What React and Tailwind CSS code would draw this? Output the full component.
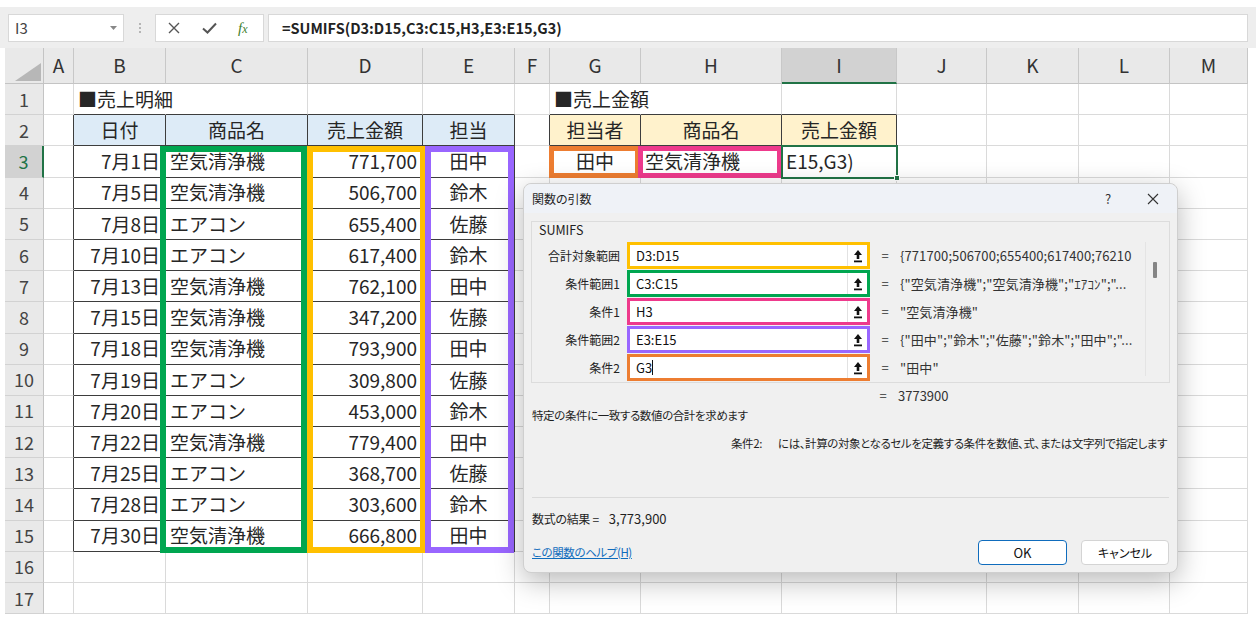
import React from 'react'

const LETTERS = ['A', 'B', 'C', 'D', 'E', 'F', 'G', 'H', 'I', 'J', 'K', 'L', 'M']

const SALES = [
  ['7月1日', '空気清浄機', '771,700', '田中'],
  ['7月5日', '空気清浄機', '506,700', '鈴木'],
  ['7月8日', 'エアコン', '655,400', '佐藤'],
  ['7月10日', 'エアコン', '617,400', '鈴木'],
  ['7月13日', '空気清浄機', '762,100', '田中'],
  ['7月15日', '空気清浄機', '347,200', '佐藤'],
  ['7月18日', '空気清浄機', '793,900', '田中'],
  ['7月19日', 'エアコン', '309,800', '佐藤'],
  ['7月20日', 'エアコン', '453,000', '鈴木'],
  ['7月22日', '空気清浄機', '779,400', '田中'],
  ['7月25日', 'エアコン', '368,700', '佐藤'],
  ['7月28日', 'エアコン', '303,600', '鈴木'],
  ['7月30日', '空気清浄機', '666,800', '田中'],
]

const ARGS = [
  { label: '合計対象範囲', val: 'D3:D15', box: 'border-[#ffc000]', res: '{771700;506700;655400;617400;76210' },
  { label: '条件範囲1', val: 'C3:C15', box: 'border-[#00a650]', res: '{"空気清浄機";"空気清浄機";"ｴｱｺﾝ";"...' },
  { label: '条件1', val: 'H3', box: 'border-[#ee3a8c]', res: '"空気清浄機"' },
  { label: '条件範囲2', val: 'E3:E15', box: 'border-[#9966ff]', res: '{"田中";"鈴木";"佐藤";"鈴木";"田中";"...' },
  { label: '条件2', val: 'G3', box: 'border-[#ed7d31]', res: '"田中"', caret: true },
]

// what sits in each cell (c: 1 = A ... 13 = M)
const getCell = (r, c) => {
  if (r === 1 && c === 2) return { t: '■売上明細', a: 'left', spill: true }
  if (r === 1 && c === 7) return { t: '■売上金額', a: 'left', spill: true }
  if (r === 2 && c >= 2 && c <= 5) {
    return { t: ['日付', '商品名', '売上金額', '担当'][c - 2], a: 'center', bg: 'bg-[#ddebf7]' }
  }
  if (r === 2 && c >= 7 && c <= 9) {
    return { t: ['担当者', '商品名', '売上金額'][c - 7], a: 'center', bg: 'bg-[#fff2cc]' }
  }
  if (r >= 3 && r <= 15 && c >= 2 && c <= 5) {
    const row = SALES[r - 3]
    return { t: row[c - 2], a: ['right', 'left', 'right', 'center'][c - 2] }
  }
  if (r === 3 && c === 7) return { t: '田中', a: 'center' }
  if (r === 3 && c === 8) return { t: '空気清浄機', a: 'left' }
  if (r === 3 && c === 9) return { t: 'E15,G3)', a: 'left' }
  return { t: '', a: 'left' }
}

const SheetCell = ({ r, c }) => {
  const info = getCell(r, c)
  const darkR = (r >= 2 && r <= 15 && c >= 1 && c <= 5) || (r >= 2 && r <= 3 && c >= 6 && c <= 9)
  const darkB = (r >= 1 && r <= 15 && c >= 2 && c <= 5) || (r >= 1 && r <= 3 && c >= 7 && c <= 9)
  const align =
    info.a === 'right' ? 'justify-end pr-[5px]' : info.a === 'center' ? 'justify-center' : 'justify-start pl-[4px]'
  const rightColor = info.spill ? 'border-r-transparent' : darkR ? 'border-r-[#3d3d3d]' : 'border-r-[#dadada]'
  return (
    <div
      className={`h-[31.2px] flex items-center overflow-visible whitespace-nowrap border-r border-b text-[19px] text-[#262626] ${rightColor} ${
        darkB ? 'border-b-[#3d3d3d]' : 'border-b-[#dadada]'
      } ${info.bg || ''} ${align}`}
    >
      {info.t}
    </div>
  )
}

const UploadIcon = () => (
  <svg width="10" height="14" viewBox="0 0 10 14">
    <path d="M5 1 L9 6 H6.3 V10 H3.7 V6 H1 Z" fill="#111" />
    <rect x="1" y="11.5" width="8" height="1.8" fill="#111" />
  </svg>
)

const Dialog = () => (
  <div className="absolute left-[523px] top-[183px] w-[655px] h-[390px] rounded-[8px] border border-[#cfcfcf] bg-[#f0f0f0] shadow-[0_8px_28px_rgba(0,0,0,0.28)] flex flex-col text-[12px] text-[#1f1f1f] font-['Noto_Sans_CJK_JP',sans-serif] [font-feature-settings:'palt']">
    <div className="h-[29px] rounded-t-[8px] bg-[#eff2f7] flex items-center pl-[8px] pr-[16px]">
      <span className="flex-1">関数の引数</span>
      <span className="w-[20px] text-center text-[13px] text-[#333] mr-[29px]">?</span>
      <svg width="12" height="12" viewBox="0 0 12 12" className="mr-[2px]">
        <path d="M1 1 L11 11 M11 1 L1 11" stroke="#333" strokeWidth="1.1" />
      </svg>
    </div>

    <div className="mx-[7px] mt-[8px] h-[162px] border border-[#dcdcdc] flex flex-col">
      <div className="h-[17px] pl-[7px] flex items-center text-[12.5px] text-[#222]">SUMIFS</div>
      <div className="mt-[3px] flex">
        <div className="flex flex-col">
          {ARGS.map(arg => (
            <div key={arg.label} className="h-[28px] flex items-start">
              <div className="w-[88px] h-[27px] flex items-center justify-end text-[#222]">{arg.label}</div>
              <div className={`ml-[7px] w-[243px] h-[27px] border-[3px] ${arg.box} bg-white flex items-center`}>
                <span className="flex-1 pl-[6px] text-[13px] text-[#111] flex items-center">
                  {arg.val}
                  {arg.caret && <span className="inline-block w-[1px] h-[15px] bg-[#111]" />}
                </span>
                <span className="w-[20px] h-full border-l border-[#e2e2e2] flex items-center justify-center">
                  <UploadIcon />
                </span>
              </div>
              <div className="w-[30px] h-[27px] flex items-center justify-center text-[13px] text-[#333]">=</div>
              <div className="w-[235px] h-[27px] flex items-center overflow-hidden whitespace-nowrap text-[13px] tracking-[0.1px] text-[#333]">
                {arg.res}
              </div>
            </div>
          ))}
        </div>
        <div className="ml-[10px] w-[18px] h-[134px] border-l border-[#e4e4e4] flex justify-center pt-[20px]">
          <div className="w-[4px] h-[16px] bg-[#858585] rounded-[1px]" />
        </div>
      </div>
    </div>

    <div className="h-[26px] flex items-center pl-[344px] text-[13px] text-[#333]">
      <span className="w-[30px] text-center">=</span>
      <span>3773900</span>
    </div>
    <div className="h-[14px] flex items-center pl-[8px] whitespace-nowrap text-[11.5px] tracking-[-0.4px]">
      特定の条件に一致する数値の合計を求めます
    </div>
    <div className="mt-[11px] h-[20px] flex items-center pl-[207px] whitespace-nowrap text-[11.5px] tracking-[-0.4px]">
      <span>条件2:</span>
      <span className="ml-[16px]">には、計算の対象となるセルを定義する条件を数値、式、または文字列で指定します</span>
    </div>
    <div className="mt-[43px] mx-[8px] h-px bg-[#dadada]" />
    <div className="mt-[11px] h-[20px] flex items-center pl-[8px] text-[12px]">
      <span className="tracking-[-0.3px]">数式の結果 =</span>
      <span className="ml-[10px] text-[13px]">3,773,900</span>
    </div>
    <div className="mt-[11px] h-[25px] flex items-center pl-[8px] pr-[8px]">
      <span className="flex-1 text-[11.5px] tracking-[-0.4px] text-[#0f6cbd] underline">この関数のヘルプ(H)</span>
      <button className="w-[89px] h-[25px] rounded-[4px] bg-white border border-[#0f6cbd] text-[13px] text-[#111]">OK</button>
      <button className="ml-[14px] w-[88px] h-[25px] rounded-[4px] bg-white border border-[#d4d4d4] text-[12px] text-[#111]">
        キャンセル
      </button>
    </div>
  </div>
)

const App = () => {
  const rows = Array.from({ length: 17 }, (_, i) => i + 1)
  return (
    <div className="relative w-[1256px] h-[621px] overflow-hidden bg-white font-['Noto_Sans_CJK_JP',sans-serif]">
      {/* formula bar */}
      <div className="h-[48px] border-t-[7px] border-white bg-[#eeeeee] flex pt-[7px]">
        <div className="ml-[8px] w-[116px] h-[28px] bg-white border border-[#d8d8d8] flex items-center pl-[6px] pr-[6px]">
          <span className="flex-1 text-[15px] text-[#444]">I3</span>
          <svg width="7" height="4" viewBox="0 0 7 4">
            <path d="M0 0 H7 L3.5 4 Z" fill="#888" />
          </svg>
        </div>
        <div className="w-[31px] h-[28px] flex flex-col items-center justify-center gap-[2px]">
          <span className="w-[2px] h-[2px] bg-[#b5b5b5]" />
          <span className="w-[2px] h-[2px] bg-[#b5b5b5]" />
          <span className="w-[2px] h-[2px] bg-[#b5b5b5]" />
        </div>
        <div className="w-[109px] h-[28px] bg-white border border-[#d8d8d8] flex items-center pl-[12px]">
          <svg width="12" height="12" viewBox="0 0 12 12">
            <path d="M1 1 L11 11 M11 1 L1 11" stroke="#555" strokeWidth="1.4" />
          </svg>
          <svg width="15" height="12" viewBox="0 0 15 12" className="ml-[22px]">
            <path d="M1 6.5 L5.5 10.5 L14 1.5" stroke="#555" strokeWidth="2" fill="none" />
          </svg>
          <span className="ml-[21px] font-['Liberation_Serif',serif] italic text-[15px] text-[#3f7f2e]">
            f<span className="text-[12px]">x</span>
          </span>
        </div>
        <div className="ml-[4px] w-[980px] h-[28px] bg-white border border-[#d8d8d8] flex items-center pl-[13px] text-[14.5px] font-semibold text-[#222]">
          =SUMIFS(D3:D15,C3:C15,H3,E3:E15,G3)
        </div>
      </div>

      {/* sheet */}
      <div className="relative ml-[5px] w-[1243px]">
        <div className="grid grid-cols-[39px_30px_92px_142px_115px_92px_35px_91px_141px_115px_90px_92px_91px_78px]">
          <div className="h-[36px] bg-[#e9e9e9] border-r border-b border-[#c4c4c4] flex items-end justify-end pr-[2px] pb-[2px]">
            <svg width="26" height="18" viewBox="0 0 26 18">
              <path d="M26 0 V18 H0 Z" fill="#b7b7b7" />
            </svg>
          </div>
          {LETTERS.map(l => (
            <div
              key={l}
              className={`h-[36px] flex items-center justify-center text-[19px] text-[#333] border-r border-[#c8c8c8] ${
                l === 'I' ? 'bg-[#d2d2d2] border-b-2 border-b-[#217346]' : 'bg-[#e9e9e9] border-b border-b-[#c4c4c4]'
              }`}
            >
              {l}
            </div>
          ))}
          {rows.map(r => (
            <React.Fragment key={r}>
              <div
                className={`h-[31.2px] flex items-center justify-center text-[18px] border-b border-b-[#d2d2d2] ${
                  r === 3
                    ? 'bg-[#d2d2d2] text-[#217346] border-r-2 border-r-[#217346]'
                    : 'bg-[#e9e9e9] text-[#444] border-r border-r-[#c4c4c4]'
                }`}
              >
                {r}
              </div>
              {LETTERS.map((l, i) => (
                <SheetCell key={l} r={r} c={i + 1} />
              ))}
            </React.Fragment>
          ))}
        </div>

        {/* range highlights */}
        <div className="absolute left-[155px] top-[98px] w-[147px] h-[407px] border-[6px] border-[#00a650] pointer-events-none" />
        <div className="absolute left-[302px] top-[98px] w-[119px] h-[407px] border-[6px] border-[#ffc000] pointer-events-none" />
        <div className="absolute left-[420px] top-[98px] w-[89px] h-[407px] border-[6px] border-[#9966ff] pointer-events-none" />
        <div className="absolute left-[544px] top-[98px] w-[91px] h-[32px] border-[5px] border-[#ed7d31] pointer-events-none" />
        <div className="absolute left-[633px] top-[98px] w-[144px] h-[32px] border-[5px] border-[#ee3a8c] pointer-events-none" />
        <div className="absolute left-[776px] top-[97px] w-[117px] h-[34px] border-2 border-[#217346] pointer-events-none">
          <span className="absolute -right-[4px] -bottom-[4px] w-[6px] h-[6px] bg-[#217346] border border-white" />
        </div>
      </div>

      <Dialog />
    </div>
  )
}

export default App
